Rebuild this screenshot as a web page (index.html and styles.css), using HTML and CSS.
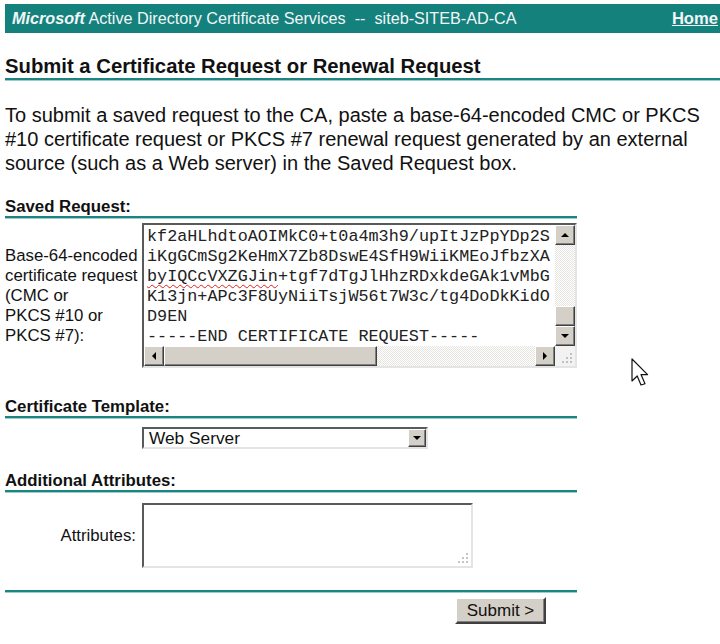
FILE: index.html
```html
<!DOCTYPE html>
<html>
<head>
  <title>Microsoft Active Directory Certificate Services</title>
  <meta charset="UTF-8">
  <meta name="viewport" content="width=device-width, initial-scale=1.0">
  <link rel="stylesheet" href="styles.css">
</head>
<body>
  <div class="topbar">
    <span><b><i>Microsoft</i></b> Active Directory Certificate Services&nbsp; --&nbsp;&nbsp;siteb-SITEB-AD-CA</span>
    <a href="#" class="home">Home</a>
  </div>

  <h3 class="page-head">Submit a Certificate Request or Renewal Request</h3>
  <p class="intro">To submit a saved request to the CA, paste a base-64-encoded CMC or PKCS #10 certificate request or PKCS #7 renewal request generated by an external source (such as a Web server) in the Saved Request box.</p>

  <form class="req-form" onsubmit="return false">
    <div class="sect sect-saved">Saved Request:</div>
    <div class="row row-saved">
      <div class="lbl">Base-64-encoded<br>certificate request<br>(CMC or<br>PKCS #10 or<br>PKCS #7):</div>
      <div class="req-box">
        <div class="req-text">kf2aHLhdtoAOIMkC0+t0a4m3h9/upItJzPpYDp2S
iKgGCmSg2KeHmX7Zb8DswE4SfH9WiiKMEoJfbzXA
<span class="spell">byIQCcVXZGJin</span>+tgf7dTgJlHhzRDxkdeGAk1vMbG
K13jn+APc3F8UyNiiTsjW56t7W3c/tg4DoDkKidO
D9EN
-----END CERTIFICATE REQUEST-----</div>
        <div class="vscroll">
          <span class="sb-btn"><span class="tri tri-up"></span></span>
          <span class="sb-track"></span>
          <span class="sb-thumb"></span>
          <span class="sb-btn"><span class="tri tri-down"></span></span>
        </div>
        <div class="hscroll">
          <span class="sb-btn"><span class="tri tri-left"></span></span>
          <span class="sb-thumb sb-thumb-h"></span>
          <span class="sb-track"></span>
          <span class="sb-btn"><span class="tri tri-right"></span></span>
        </div>
        <div class="corner">
          <svg width="20" height="20" viewBox="0 0 20 20">
            <rect x="15" y="7" width="2" height="2" fill="#c0c0c0"/>
            <rect x="11" y="11" width="2" height="2" fill="#c0c0c0"/>
            <rect x="15" y="11" width="2" height="2" fill="#c0c0c0"/>
            <rect x="7" y="15" width="2" height="2" fill="#c0c0c0"/>
            <rect x="11" y="15" width="2" height="2" fill="#c0c0c0"/>
            <rect x="15" y="15" width="2" height="2" fill="#c0c0c0"/>
          </svg>
        </div>
      </div>
    </div>

    <div class="sect sect-template">Certificate Template:</div>
    <div class="row row-template">
      <div class="lbl"></div>
      <div class="select-box">
        <span>Web Server</span>
        <span class="drop-btn"><span class="tri tri-down"></span></span>
      </div>
    </div>

    <div class="sect sect-attr">Additional Attributes:</div>
    <div class="row row-attr">
      <div class="lbl lbl-right">Attributes:</div>
      <div class="attr-box">
        <svg class="grip" width="14" height="14" viewBox="0 0 14 14">
          <rect x="10" y="2" width="2" height="2" fill="#c4c4c4"/>
          <rect x="6" y="6" width="2" height="2" fill="#c4c4c4"/>
          <rect x="10" y="6" width="2" height="2" fill="#c4c4c4"/>
          <rect x="2" y="10" width="2" height="2" fill="#c4c4c4"/>
          <rect x="6" y="10" width="2" height="2" fill="#c4c4c4"/>
          <rect x="10" y="10" width="2" height="2" fill="#c4c4c4"/>
        </svg>
      </div>
    </div>

    <div class="rule"></div>
    <div class="actions">
      <button class="submit-btn">Submit &gt;</button>
    </div>
  </form>

  <svg class="cursor" width="18" height="30" viewBox="0 0 18 30">
    <polygon points="1,1 1,23 6.2,18 10,27 14,25.7 10,16.6 16.6,16.6" fill="#fff" stroke="#111" stroke-width="1.2" stroke-linejoin="round"/>
  </svg>
</body>
</html>
```

FILE: styles.css
```css
body {
  margin: 0;
  padding: 4px 0 0 5px;
  font-family: "Liberation Sans", Arial, sans-serif;
  color: #111;
}
.topbar {
  display: flex;
  justify-content: space-between;
  align-items: center;
  height: 29px;
  padding: 0 2px 0 7px;
  background-color: #14817d;
  color: #f2f6f6;
  font-size: 16.2px;
}
.home {
  color: #f2f6f6;
  font-weight: bold;
  font-size: 16.6px;
  text-decoration: underline;
}
.page-head {
  margin: 21px 0 0 0;
  font-size: 20.3px;
  line-height: 24px;
  border-bottom: 2px solid #1c8581;
  box-shadow: 0 1px 0 #9ecbc9;
}
.intro {
  width: 708px;
  margin: 23px 0 0 0;
  font-size: 20px;
  line-height: 24px;
}
.req-form {
  width: 572px;
  margin: 0;
}
.sect {
  font-size: 16.8px;
  font-weight: bold;
  line-height: 18px;
  border-bottom: 2px solid #1c8581;
  box-shadow: 0 1px 0 #9ecbc9;
}
.sect-saved { margin-top: 23px; }
.sect-template { margin-top: 30px; }
.sect-attr { margin-top: 23px; }

.row {
  display: grid;
  grid-template-columns: 137px auto;
  align-items: center;
}
.row-saved { margin-top: 5px; }
.row-template { margin-top: 9px; }
.row-attr { margin-top: 11px; }
.lbl {
  font-size: 16.8px;
  line-height: 20px;
}
.lbl-right {
  text-align: right;
  padding-right: 6px;
}

/* saved request textarea */
.req-box {
  width: 435px;
  height: 145px;
  box-sizing: border-box;
  border: 2px solid;
  border-color: #5a5a5a #e4e4e4 #e4e4e4 #5a5a5a;
  display: grid;
  grid-template-columns: 1fr 20px;
  grid-template-rows: 1fr 20px;
  background: #fff;
}
.req-text {
  overflow: hidden;
  white-space: pre;
  padding: 2px 0 0 3px;
  font-family: "Liberation Mono", "Courier New", monospace;
  font-size: 16.8px;
  line-height: 20px;
  color: #222;
}
.spell {
  text-decoration: underline wavy #e02020;
  text-decoration-thickness: 1px;
  text-underline-offset: 3px;
}
.vscroll,
.hscroll {
  display: flex;
  background: repeating-conic-gradient(#ffffff 0 25%, #e6e4df 0 50%) 0 0 / 2px 2px;
}
.vscroll { flex-direction: column; }
.sb-track { flex: 1; }
.sb-btn,
.sb-thumb,
.drop-btn {
  box-sizing: border-box;
  background-color: #d4d0c8;
  border: 1px solid;
  border-color: #ffffff #404040 #404040 #ffffff;
  box-shadow: inset -1px -1px 0 #808080;
}
.sb-btn {
  width: 20px;
  height: 20px;
  display: flex;
  align-items: center;
  justify-content: center;
}
.sb-thumb {
  width: 20px;
  height: 20px;
}
.sb-thumb-h {
  width: 213px;
}
.corner {
  background: #f2f2f2;
}
.corner svg { display: block; }

.tri {
  width: 0;
  height: 0;
  border-style: solid;
  border-color: transparent;
}
.tri-up {
  border-width: 0 4px 4px 4px;
  border-bottom-color: #000;
}
.tri-down {
  border-width: 4px 4px 0 4px;
  border-top-color: #000;
}
.tri-left {
  border-width: 4px 4px 4px 0;
  border-right-color: #000;
}
.tri-right {
  border-width: 4px 0 4px 4px;
  border-left-color: #000;
}

/* template dropdown */
.select-box {
  width: 286px;
  height: 22px;
  box-sizing: border-box;
  border: 2px solid;
  border-color: #5a5a5a #e4e4e4 #e4e4e4 #5a5a5a;
  display: flex;
  align-items: center;
  justify-content: space-between;
  padding-left: 5px;
  font-size: 17.3px;
  color: #111;
}
.drop-btn {
  width: 18px;
  height: 18px;
  display: flex;
  align-items: center;
  justify-content: center;
}

/* attributes textarea */
.attr-box {
  position: relative;
  width: 331px;
  height: 65px;
  box-sizing: border-box;
  border: 2px solid;
  border-color: #5a5a5a #e4e4e4 #e4e4e4 #5a5a5a;
  background: #fff;
}
.grip {
  position: absolute;
  right: 1px;
  bottom: 1px;
}

.rule {
  margin-top: 22px;
  border-bottom: 2px solid #1c8581;
  box-shadow: 0 1px 0 #9ecbc9;
}
.actions {
  display: flex;
  justify-content: flex-end;
  padding-right: 31px;
  margin-top: 5px;
}
.submit-btn {
  width: 91px;
  height: 27px;
  box-sizing: border-box;
  background-color: #d4d0c8;
  border: 2px solid;
  border-color: #ffffff #404040 #404040 #ffffff;
  box-shadow: inset -1px -1px 0 #808080;
  font-family: "Liberation Sans", Arial, sans-serif;
  font-size: 17px;
  color: #111;
  padding: 0;
}
.cursor {
  position: absolute;
  left: 631px;
  top: 358px;
}
```
